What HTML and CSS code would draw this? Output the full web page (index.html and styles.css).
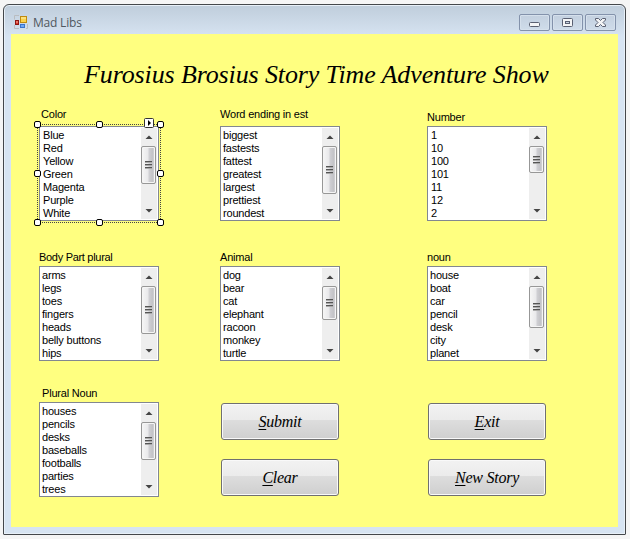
FILE: index.html
```
<!DOCTYPE html>
<html lang="en">
<head>
<meta charset="utf-8">
<title>Mad Libs</title>
<link rel="stylesheet" href="styles.css">
</head>
<body>
<div class="window">
  <header class="titlebar">
    <svg class="app-icon" width="14" height="14" viewBox="0 0 14 14">
      <path d="M.5 4.500V.5H5M.5 10v3.500H5M13.500 9v4.500H12" fill="none" stroke="#b9bcc0"/>
      <rect x="6.500" y="1.500" width="6" height="6" fill="#fbd24c" stroke="#c08a10"/>
      <path d="M7 3h5" stroke="#fff0a8"/>
      <rect x="1.500" y="5.500" width="3" height="4" fill="#d9382c" stroke="#8e1712"/>
      <path d="M3 6v2" stroke="#ffb0a0"/>
      <rect x="6.500" y="9.500" width="4" height="3" fill="#6fa8f5" stroke="#3c74cc"/>
    </svg>
    <span class="caption">Mad Libs</span>
    <div class="controls">
      <span class="control"><svg width="29" height="15" viewBox="0 0 29 15"><rect x="9.500" y="7.500" width="10" height="4" rx="1" fill="#f4f5f6" stroke="#5a6072"/></svg></span>
      <span class="control"><svg width="29" height="15" viewBox="0 0 29 15"><rect x="9.500" y="3.500" width="10" height="8" rx="1" fill="#f4f5f6" stroke="#5a6072"/><rect x="12.500" y="6.500" width="4" height="2" fill="#c8d3e0" stroke="#5a6072"/></svg></span>
      <span class="control"><svg width="29" height="15" viewBox="0 0 29 15"><path d="M9.500 3.500h3l2 2 2-2h3v1.500L17 7.500l2.500 2.500v1.500h-3l-2-2-2 2h-3V10L12 7.500 9.500 5z" fill="#f4f5f6" stroke="#5a6072"/></svg></span>
    </div>
  </header>
  <main class="form">
    <h1 class="heading">Furosius Brosius Story Time Adventure Show</h1>
    <div class="fields" id="fields"></div>
  </main>
</div>
<script src="app.js"></script>
</body>
</html>
```
FILE: app.js
```
const lists = [
  { label: 'Color', mod: 'color', thumb: 38, items: ['Blue', 'Red', 'Yellow', 'Green', 'Magenta', 'Purple', 'White'] },
  { label: 'Word ending in est', mod: 'word', thumb: 48, items: ['biggest', 'fastests', 'fattest', 'greatest', 'largest', 'prettiest', 'roundest'] },
  { label: 'Number', mod: 'number', thumb: 27, items: ['1', '10', '100', '101', '11', '12', '2'] },
  { label: 'Body Part plural', mod: 'body', thumb: 48, items: ['arms', 'legs', 'toes', 'fingers', 'heads', 'belly buttons', 'hips'] },
  { label: 'Animal', mod: 'animal', thumb: 34, items: ['dog', 'bear', 'cat', 'elephant', 'racoon', 'monkey', 'turtle'] },
  { label: 'noun', mod: 'noun', thumb: 42, items: ['house', 'boat', 'car', 'pencil', 'desk', 'city', 'planet'] },
  { label: 'Plural Noun', mod: 'plural', thumb: 38, items: ['houses', 'pencils', 'desks', 'baseballs', 'footballs', 'parties', 'trees'] }
];

const arrow = (d) => `<svg class="arrow" width="16" height="18" viewBox="0 0 16 18"><path d="${d}" fill="#444"/></svg>`;

const selection = `<div class="selection">
  ${['nw', 'n', 'ne', 'w', 'e', 'sw', 's', 'se'].map((p) => `<i class="handle ${p}"></i>`).join('')}
  <svg class="smart-tag" width="10" height="10" viewBox="0 0 10 10"><rect x=".5" y=".5" width="9" height="9" rx="1" fill="#fff" stroke="#333"/><path d="M4 2l3 3-3 3z"/></svg>
</div>`;

const field = (f) => `<section class="field ${f.mod}">
  <label class="label">${f.label}</label>
  <div class="listbox">
    <ul class="items">${f.items.map((i) => `<li>${i}</li>`).join('')}</ul>
    <div class="scrollbar">
      ${arrow('M4.500 11L8 7.500l3.500 3.500z')}
      <div class="track"><div class="thumb" style="height:${f.thumb}px"><i></i><i></i><i></i></div></div>
      ${arrow('M4.500 8h7L8 11.500z')}
    </div>
    ${f.mod === 'color' ? selection : ''}
  </div>
</section>`;

const buttons = (a) => `<div class="buttons">${a.map(([k, r, c]) => `<button class="${c}"><span><u>${k}</u>${r}</span></button>`).join('')}</div>`;

document.getElementById('fields').innerHTML = lists.map(field).join('')
  + buttons([['S', 'ubmit', 'submit'], ['C', 'lear', 'clear']])
  + buttons([['E', 'xit', 'exit'], ['N', 'ew Story', 'new']]);
```
FILE: styles.css
```
* { box-sizing: border-box; }
body {
  margin: 0;
  padding: 4px 4px 4px 3px;
  height: 539px;
  overflow: hidden;
  background: #f5f5f5;
  font: 11px/13px "Liberation Sans", Arial, sans-serif;
  letter-spacing: -0.2px;
  color: #000;
}
.window {
  height: 531px;
  width: 623px;
  padding: 0 7px;
  border: 1px solid #44474b;
  border-radius: 6px 6px 1px 1px;
  background: linear-gradient(#bfcddb, #d7e4f2 32px);
  box-shadow: inset 0 0 0 1px #e8f0f8;
}
.titlebar {
  display: flex;
  align-items: flex-start;
  height: 29px;
  padding: 10px 2px 0 3px;
}
.caption {
  margin: 0 0 0 5px;
  font: 12px/16px "Open Sans", sans-serif;
  letter-spacing: -0.2px;
  color: #505860;
}
.controls {
  display: flex;
  gap: 2px;
  margin: -1px 0 0 auto;
}
.control {
  width: 31px;
  height: 17px;
  border: 1px solid #8392ab;
  border-radius: 2px;
  background: linear-gradient(#c3d0df, #cfdcea);
  box-shadow: inset 0 0 0 1px #d5e0ec;
}
.control svg { display: block; }
.form {
  height: 493px;
  padding: 24px 0 0 28px;
  background: #ffff80;
}
.heading {
  margin: 0 0 0 45px;
  height: 48px;
  font: italic 26px/34px "Monotype Corsiva", "Liberation Serif", serif;
  letter-spacing: -0.12px;
  white-space: nowrap;
}
.fields {
  display: grid;
  grid-template-columns: 181px 207px 120px;
  grid-template-rows: 115px 140px 136px;
}
.field {
  display: flex;
  flex-direction: column;
  justify-content: flex-end;
  width: 120px;
}
.label {
  margin-bottom: 2px;
  white-space: nowrap;
}
.color .label { margin: 0 0 5px 2px; }
.word .label { margin-bottom: 5px; }
.body .label { letter-spacing: -0.3px; }
.plural .label { margin-left: 3px; }
.listbox {
  position: relative;
  display: flex;
  justify-content: space-between;
  height: 95px;
  padding: 1px;
  border: 1px solid #828790;
  background: #fff;
}
.items {
  margin: 0;
  padding: 1px 0 0 1px;
  list-style: none;
}
.color .items, .number .items { padding-left: 2px; }
.scrollbar {
  display: flex;
  flex-direction: column;
  width: 16px;
  background: #eee;
}
.arrow { display: block; flex: none; }
.track { flex: 1; }
.thumb {
  display: flex;
  flex-direction: column;
  align-items: center;
  justify-content: center;
  gap: 1px;
  width: 15px;
  border: 1px solid #979797;
  border-radius: 2px;
  background: linear-gradient(90deg, #f6f6f6 0, #e9e9eb 45%, #cfcfd3 55%, #c3c3c7 80%, #dcdcde);
  box-shadow: inset 0 0 0 1px #f5f5f5;
}
.thumb i {
  width: 7px;
  height: 2px;
  border-top: 1px solid #555;
  border-bottom: 1px solid #aaa;
}
.selection {
  position: absolute;
  inset: -3px;
  border: 1px dotted #444;
}
.handle {
  position: absolute;
  width: 7px;
  height: 7px;
  border: 1px solid #000;
  border-radius: 2px;
  background: #fff;
}
.nw, .w, .sw { left: -4px; }
.n, .s { left: 58px; }
.ne, .e, .se { right: -4px; }
.nw, .n, .ne { top: -4px; }
.w, .e { top: 45px; }
.sw, .s, .se { bottom: -4px; }
.smart-tag {
  position: absolute;
  top: -7px;
  right: 6px;
}
.buttons {
  display: flex;
  flex-direction: column;
  gap: 19px;
  padding: 42px 0 0 1px;
}
button {
  width: 118px;
  height: 37px;
  padding: 0;
  border: 1px solid #707070;
  border-radius: 3px;
  background: linear-gradient(#f2f2f2, #ebebeb 47%, #dddddd 47%, #cfcfcf);
  box-shadow: inset 0 0 0 1px #f9f9f9;
  font: italic 16px/20px "Monotype Corsiva", "Liberation Serif", serif;
  letter-spacing: -0.25px;
  color: #000;
}
button u { text-underline-offset: 2px; text-decoration-thickness: 1px; }
```
